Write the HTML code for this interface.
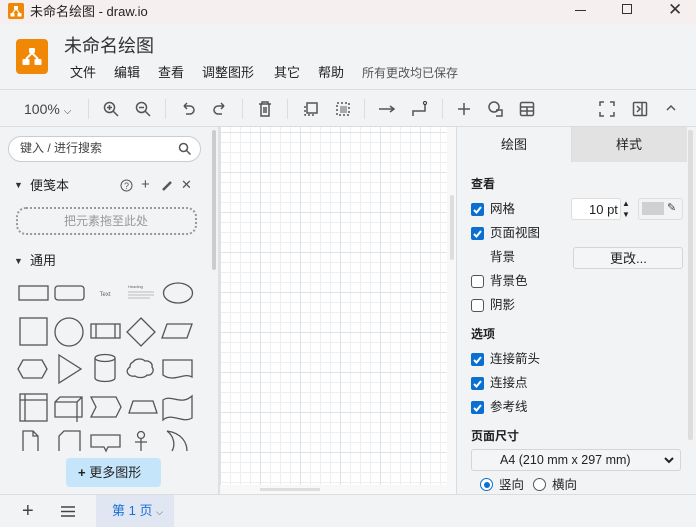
<!DOCTYPE html><html><head><meta charset="utf-8"><style>
*{box-sizing:border-box;margin:0;padding:0}
body{width:696px;height:527px;overflow:hidden;background:#f1f3f4;font-family:"Liberation Sans","Noto Sans CJK SC",sans-serif;color:#222;position:relative;font-size:12px}
.a{position:absolute}
.cb{position:absolute;width:13px;height:13px;border-radius:2px;background:#0b6fd0}
.cb svg{display:block}
.cu{position:absolute;width:13px;height:13px;border-radius:3px;border:1px solid #555;background:#fff}
.t{position:absolute;font-size:12.5px;color:#222;white-space:nowrap;line-height:1.2}
.ic{stroke:#555;fill:none;stroke-width:1.5}
</style></head><body>
<div class="a" style="left:0;top:0;width:696px;height:24px;background:#f6eff0"></div>
<div class="a" style="left:8px;top:3px;width:16px;height:16px;background:#f08705;border-radius:2px"></div>
<svg class="a" style="left:8px;top:3px" width="16" height="16"><rect x="6" y="3" width="4" height="3.5" fill="#fff"/><rect x="2.5" y="10" width="4" height="3.5" fill="#fff"/><rect x="9.5" y="10" width="4" height="3.5" fill="#fff"/><path d="M8 6L4.5 10M8 6l3.5 4" stroke="#fff" stroke-width="1.2"/></svg>
<div class="t" style="left:30px;top:4px;font-size:13px">未命名绘图 - draw.io</div>
<div class="a" style="left:575px;top:10px;width:11px;height:1px;background:#333"></div>
<div class="a" style="left:622px;top:4px;width:10px;height:10px;border:1px solid #333"></div>
<div class="t" style="left:668px;top:0px;font-size:17px;color:#333">✕</div>
<div class="a" style="left:16px;top:39px;width:32px;height:35px;background:#f08705;border-radius:4px"></div>
<svg class="a" style="left:16px;top:39px" width="32" height="35"><rect x="13" y="9" width="6" height="5" fill="#fff" rx="1"/><rect x="6.5" y="20" width="7" height="6" fill="#fff" rx="1"/><rect x="18.5" y="20" width="7" height="6" fill="#fff" rx="1"/><path d="M16 14l-6 6M16 14l6 6" stroke="#fff" stroke-width="2"/></svg>
<div class="t" style="left:64px;top:36px;font-size:18px;color:#333">未命名绘图</div>
<div class="t" style="left:70px;top:65px;font-size:13px">文件</div>
<div class="t" style="left:114px;top:65px;font-size:13px">编辑</div>
<div class="t" style="left:158px;top:65px;font-size:13px">查看</div>
<div class="t" style="left:202px;top:65px;font-size:13px">调整图形</div>
<div class="t" style="left:274px;top:65px;font-size:13px">其它</div>
<div class="t" style="left:318px;top:65px;font-size:13px">帮助</div>
<div class="t" style="left:362px;top:66px;font-size:12px;color:#555">所有更改均已保存</div>
<div class="a" style="left:0;top:89px;width:696px;height:1px;background:#dadce0"></div>
<div class="a" style="left:0;top:126px;width:696px;height:1px;background:#dadce0"></div>
<div class="t" style="left:24px;top:101px;font-size:14px;color:#444">100% <span style="font-size:10px">⌵</span></div>
<div class="a" style="left:88px;top:99px;width:1px;height:20px;background:#ddd"></div>
<svg class="a" style="left:102px;top:100px" width="18" height="18"><circle cx="7.5" cy="7.5" r="5" class="ic" stroke="#444" stroke-width="2"/><path d="M11 11l5 5M5 7.5h5M7.5 5v5" class="ic" stroke="#444" stroke-width="2"/></svg>
<svg class="a" style="left:134px;top:100px" width="18" height="18"><circle cx="7.5" cy="7.5" r="5" class="ic" stroke="#444" stroke-width="2"/><path d="M11 11l5 5M5 7.5h5" class="ic" stroke="#444" stroke-width="2"/></svg>
<div class="a" style="left:165px;top:99px;width:1px;height:20px;background:#ddd"></div>
<svg class="a" style="left:180px;top:101px" width="16" height="16"><path d="M4 5h6a4 4 0 010 8H6M4 5l3-3M4 5l3 3" class="ic" stroke="#aaa"/></svg>
<svg class="a" style="left:212px;top:101px" width="16" height="16"><path d="M12 5H6a4 4 0 000 8h4M12 5L9 2M12 5L9 8" class="ic" stroke="#aaa"/></svg>
<div class="a" style="left:242px;top:99px;width:1px;height:20px;background:#ddd"></div>
<svg class="a" style="left:257px;top:100px" width="16" height="18"><path d="M2 4h12M5 4V2h6v2M4 4v12h8V4M7 7v6M9 7v6" class="ic" stroke="#aaa"/></svg>
<div class="a" style="left:287px;top:99px;width:1px;height:20px;background:#ddd"></div>
<svg class="a" style="left:302px;top:100px" width="18" height="18"><rect x="5" y="3" width="10" height="10" class="ic" stroke="#aaa"/><path d="M3 6v9h9" class="ic" stroke="#aaa" stroke-dasharray="2 2"/></svg>
<svg class="a" style="left:334px;top:100px" width="18" height="18"><rect x="3" y="3" width="12" height="12" class="ic" stroke="#aaa" stroke-dasharray="2 2"/><rect x="6" y="6" width="7" height="7" fill="#aaa"/></svg>
<div class="a" style="left:364px;top:99px;width:1px;height:20px;background:#ddd"></div>
<svg class="a" style="left:378px;top:102px" width="20" height="14"><path d="M1 7h15M12 4l4 3-4 3" class="ic" stroke="#333"/></svg>
<svg class="a" style="left:410px;top:100px" width="20" height="18"><path d="M3 16v-5h12V4" class="ic" stroke="#333" stroke-width="1.7"/><circle cx="15" cy="3" r="1.5" fill="none" stroke="#333"/></svg>
<div class="a" style="left:442px;top:99px;width:1px;height:20px;background:#ddd"></div>
<svg class="a" style="left:456px;top:101px" width="16" height="16"><path d="M8 2v12M2 8h12" class="ic" stroke="#444" stroke-width="1.7"/></svg>
<svg class="a" style="left:487px;top:100px" width="18" height="18"><circle cx="7" cy="7" r="5" class="ic" stroke="#444"/><path d="M9 10h6v6H9" class="ic" stroke="#444"/></svg>
<svg class="a" style="left:519px;top:101px" width="16" height="16"><rect x="1.5" y="1.5" width="13" height="13" rx="1.5" class="ic" stroke="#444"/><path d="M1.5 6h13M1.5 10h13M8 6v8.5" class="ic" stroke="#444"/></svg>
<svg class="a" style="left:599px;top:101px" width="16" height="16"><path d="M1 5V1h4M11 1h4v4M15 11v4h-4M5 15H1v-4" class="ic" stroke="#444" stroke-width="1.7"/></svg>
<svg class="a" style="left:632px;top:101px" width="16" height="16"><rect x="1.5" y="1.5" width="13" height="13" rx="1" class="ic" stroke="#444" stroke-width="1.7"/><path d="M10 1.5v13M5 5l3 3-3 3" class="ic" stroke="#444"/></svg>
<svg class="a" style="left:665px;top:103px" width="12" height="10"><path d="M2 7l4-4 4 4" class="ic" stroke="#444" stroke-width="1.7"/></svg>
<div class="a" style="left:8px;top:136px;width:193px;height:26px;border:1px solid #ccc;border-radius:13px;background:#fff"></div>
<div class="t" style="left:20px;top:141px;font-size:12px;color:#444">键入 / 进行搜索</div>
<svg class="a" style="left:178px;top:142px" width="14" height="14"><circle cx="5.5" cy="5.5" r="4" class="ic" stroke="#222" stroke-width="1.8"/><path d="M8.5 8.5l4 4" class="ic" stroke="#222" stroke-width="2"/></svg>
<div class="t" style="left:14px;top:180px;font-size:9px;color:#333">▼</div>
<div class="t" style="left:30px;top:178px;font-size:13px">便笺本</div>
<svg class="a" style="left:120px;top:179px" width="13" height="13"><circle cx="6.5" cy="6.5" r="5.5" fill="#f1f3f4" stroke="#555"/><text x="6.5" y="10" font-size="9" text-anchor="middle" fill="#555" font-family="Liberation Sans">?</text></svg>
<div class="t" style="left:141px;top:176px;font-size:15px;color:#555">+</div>
<svg class="a" style="left:161px;top:180px" width="12" height="12"><path d="M2 10L10 2" stroke="#555" stroke-width="2.5"/></svg>
<div class="t" style="left:181px;top:177px;font-size:13px;color:#555">✕</div>
<div class="a" style="left:16px;top:207px;width:181px;height:28px;border:2px dotted #999;border-radius:10px"></div>
<div class="t" style="left:64px;top:214px;font-size:12px;color:#999">把元素拖至此处</div>
<div class="t" style="left:14px;top:256px;font-size:9px;color:#333">▼</div>
<div class="t" style="left:30px;top:253px;font-size:13px">通用</div>
<div class="a" style="left:212px;top:130px;width:4px;height:140px;background:#ccc;border-radius:2px"></div>
<svg class="a" style="left:0;top:270px" width="210" height="185" fill="none" stroke="#555" stroke-width="1.3">
<rect x="19" y="16" width="29" height="14"/><rect x="55" y="16" width="29" height="14" rx="3"/>
<text x="105" y="26" font-size="6" fill="#666" stroke="none" text-anchor="middle">Text</text>
<text x="128" y="18" font-size="4" fill="#666" stroke="none">Heading</text><path d="M128 22h26M128 25h26M128 28h22" stroke="#aaa" stroke-width=".8"/>
<ellipse cx="178" cy="23" rx="14.5" ry="10"/>
<rect x="20" y="48" width="27" height="27"/><circle cx="69" cy="62" r="14"/><rect x="91" y="54" width="29" height="14"/><path d="M96 54v14M115 54v14"/>
<path d="M141 48l14 14-14 14-14-14z"/><path d="M167 54h25l-5 14h-25z"/>
<path d="M18 99l5-9h19l5 9-5 9H23z"/><path d="M59 85l22 14-22 14z"/>
<path d="M95 88v20a10 3.5 0 0020 0V88a10 3.5 0 00-20 0 10 3.5 0 0020 0"/>
<path d="M133 92a7 5 0 0112-1 6 5 0 017 6 5 5 0 01-5 8 7 4 0 01-12 1 6 5 0 01-5-9 5 5 0 013-5z"/>
<path d="M163 90h29v17c-8-5-18 6-29-2z"/>
<rect x="20" y="124" width="27" height="27"/><path d="M25 124v27M20 130h27"/>
<path d="M55 132l5-5h22v20H55zM55 132h22v20M77 132l5-5"/>
<path d="M91 127h25l5 10-5 10H91l5-10z"/><path d="M133 131h20l4 12h-28z"/>
<path d="M163 130c8-6 18 6 29-4v22c-10 6-20-6-29 2z"/>
<path d="M23 181v-20h10l5 5v15M33 161v5h5"/><path d="M59 181v-15l5-5h16v20"/>
<path d="M91 165h29v12h-12l-2 4-2-4H91z"/><circle cx="141" cy="165" r="3.5"/><path d="M141 169v12M135 172h12"/>
<path d="M167 161c15 2 20 12 20 20"/><path d="M167 161c8 6 8 15 5 20"/>
</svg>
<div class="a" style="left:66px;top:458px;width:95px;height:29px;background:#c5e5fb;border-radius:4px"></div>
<div class="t" style="left:78px;top:465px;font-size:13px;color:#222"><b>+</b> 更多图形</div>
<div class="a" style="left:220px;top:127px;width:236px;height:367px;background:#fff;background-image:linear-gradient(#eceff1 1px,transparent 1px),linear-gradient(90deg,#eceff1 1px,transparent 1px);background-size:10px 10px;background-position:0 5px"></div>
<div class="a" style="left:220px;top:127px;width:236px;height:367px;background-image:linear-gradient(#dfe3e6 1px,transparent 1px),linear-gradient(90deg,#dfe3e6 1px,transparent 1px);background-size:40px 40px;background-position:0 5px"></div>
<div class="a" style="left:447px;top:127px;width:9px;height:367px;background:#f8f8f8"></div>
<div class="a" style="left:450px;top:195px;width:4px;height:65px;background:#ddd;border-radius:2px"></div>
<div class="a" style="left:220px;top:485px;width:227px;height:9px;background:#f8f8f8"></div>
<div class="a" style="left:260px;top:488px;width:60px;height:3px;background:#ddd"></div>
<div class="a" style="left:218px;top:127px;width:2px;height:367px;background:#e0e0e0"></div>
<div class="a" style="left:456px;top:127px;width:1px;height:367px;background:#dadce0"></div>
<div class="a" style="left:571px;top:127px;width:116px;height:35px;background:#e2e2e2;border-left:1px solid #ddd"></div>
<div class="t" style="left:501px;top:137px;font-size:13px">绘图</div>
<div class="t" style="left:616px;top:137px;font-size:13px">样式</div>
<div class="a" style="left:688px;top:130px;width:5px;height:310px;background:#ddd;border-radius:2px"></div>
<div class="t" style="left:471px;top:177px;font-weight:bold;font-size:12px">查看</div>
<div class="cb" style="left:471px;top:203px"><svg width="13" height="13"><path d="M3 7l2.5 2.5L10 4" stroke="#fff" stroke-width="2" fill="none"/></svg></div>
<div class="t" style="left:490px;top:202px">网格</div>
<div class="a" style="left:571px;top:198px;width:50px;height:22px;background:#fff;border:1px solid #ddd;border-radius:3px"></div>
<div class="t" style="left:589px;top:202px;font-size:13px">10 pt</div>
<div class="t" style="left:622px;top:198px;font-size:8px;line-height:11px">▲<br>▼</div>
<div class="a" style="left:638px;top:198px;width:45px;height:22px;border:1px solid #ddd;border-radius:3px;background:#f1f3f4"></div>
<div class="a" style="left:642px;top:202px;width:22px;height:13px;background:#d0d0d0"></div>
<div class="t" style="left:667px;top:202px;font-size:11px;color:#444">✎</div>
<div class="cb" style="left:471px;top:227px"><svg width="13" height="13"><path d="M3 7l2.5 2.5L10 4" stroke="#fff" stroke-width="2" fill="none"/></svg></div>
<div class="t" style="left:490px;top:226px">页面视图</div>
<div class="t" style="left:490px;top:250px">背景</div>
<div class="a" style="left:573px;top:247px;width:110px;height:22px;background:#f4f5f6;border:1px solid #d5d5d5;border-radius:3px"></div>
<div class="t" style="left:610px;top:251px;font-size:13px">更改...</div>
<div class="cu" style="left:471px;top:275px"></div><div class="t" style="left:490px;top:274px">背景色</div>
<div class="cu" style="left:471px;top:299px"></div><div class="t" style="left:490px;top:298px">阴影</div>
<div class="t" style="left:471px;top:327px;font-weight:bold;font-size:12px">选项</div>
<div class="cb" style="left:471px;top:353px"><svg width="13" height="13"><path d="M3 7l2.5 2.5L10 4" stroke="#fff" stroke-width="2" fill="none"/></svg></div><div class="t" style="left:490px;top:352px">连接箭头</div>
<div class="cb" style="left:471px;top:377px"><svg width="13" height="13"><path d="M3 7l2.5 2.5L10 4" stroke="#fff" stroke-width="2" fill="none"/></svg></div><div class="t" style="left:490px;top:376px">连接点</div>
<div class="cb" style="left:471px;top:401px"><svg width="13" height="13"><path d="M3 7l2.5 2.5L10 4" stroke="#fff" stroke-width="2" fill="none"/></svg></div><div class="t" style="left:490px;top:400px">参考线</div>
<div class="t" style="left:471px;top:429px;font-weight:bold;font-size:12px">页面尺寸</div>
<div class="a" style="left:471px;top:449px;width:210px;height:22px;background:#f4f5f6;border:1px solid #d5d5d5;border-radius:3px"></div>
<div class="t" style="left:500px;top:453px;font-size:12.5px">A4 (210 mm x 297 mm)</div>
<svg class="a" style="left:664px;top:456px" width="10" height="8"><path d="M1 2l4 4 4-4" stroke="#222" stroke-width="2" fill="none"/></svg>
<div class="a" style="left:480px;top:478px;width:13px;height:13px;border-radius:50%;border:1.5px solid #0b6fd0;background:#fff"></div>
<div class="a" style="left:483.5px;top:481.5px;width:6px;height:6px;border-radius:50%;background:#0b6fd0"></div>
<div class="t" style="left:499px;top:478px">竖向</div>
<div class="a" style="left:533px;top:478px;width:13px;height:13px;border-radius:50%;border:1px solid #555;background:#fff"></div>
<div class="t" style="left:552px;top:478px">横向</div>
<div class="a" style="left:0;top:494px;width:696px;height:1px;background:#dadce0"></div>
<div class="t" style="left:22px;top:499px;font-size:20px;color:#444">+</div>
<svg class="a" style="left:61px;top:506px" width="14" height="11"><path d="M0 1h14M0 5.5h14M0 10h14" stroke="#444" stroke-width="1.6"/></svg>
<div class="a" style="left:96px;top:495px;width:78px;height:32px;background:#e0e7f3"></div>
<div class="t" style="left:112px;top:503px;font-size:13px;color:#1a6fd6">第 1 页 <span style="font-size:9px;color:#555">⌵</span></div>
</body></html>
